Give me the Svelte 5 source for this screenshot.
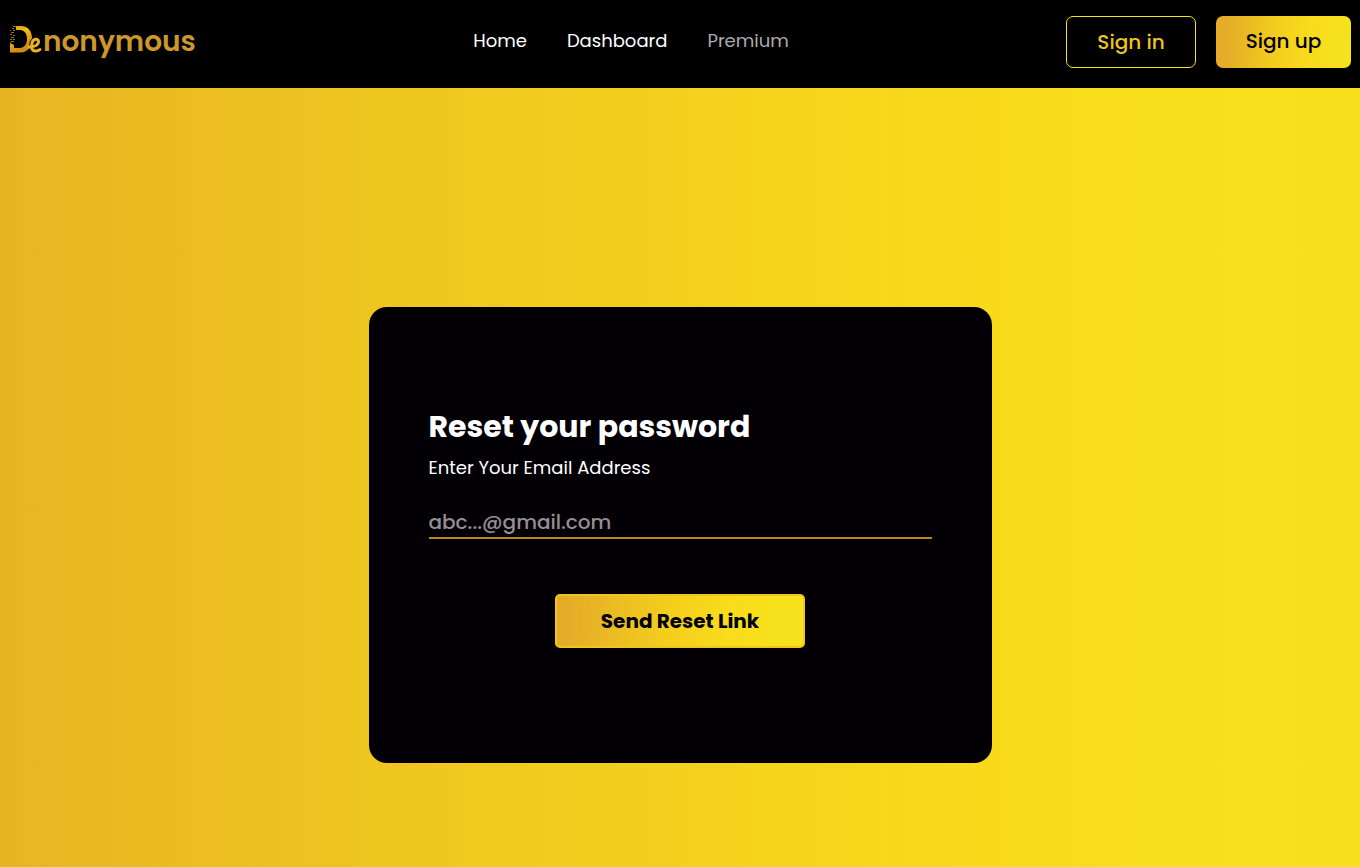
<script>
  let email = $state('');
</script>

<div class="page">
  <header>
    <a class="logo" href="#home" aria-label="Denonymous">
      <svg width="34" height="30" viewBox="0 0 34 30" aria-hidden="true">
        <defs>
          <linearGradient id="gold" gradientUnits="userSpaceOnUse" x1="4" y1="0" x2="20" y2="30">
            <stop offset="0" stop-color="#d99a16" />
            <stop offset="0.3" stop-color="#f0bd1c" />
            <stop offset="0.6" stop-color="#dc9a17" />
            <stop offset="0.8" stop-color="#cf8614" />
            <stop offset="1" stop-color="#eab01a" />
          </linearGradient>
        </defs>
        <path
          fill="url(#gold)"
          d="M7 1H12C19 1 23 6 23 13.500C23 22 18 27.500 12 27.500H1V18L5 20V23H11C15 23 18 19.500 18 14C18 8.500 15.500 5 11 5H7Z"
        />
        <path
          fill="none"
          stroke="#000"
          stroke-width="5"
          d="M22.500 21C26 21 29.500 19.500 29.500 16.500C29.500 13.500 24 14 23 18C22 22 22.500 26 26.500 26"
        />
        <path
          fill="none"
          stroke="#eab31d"
          stroke-width="3"
          stroke-linecap="round"
          d="M20 22C25.500 22 29.500 20 29.500 16.500C29.500 13 24 13.500 23 18C22 23 23 26 26.500 26C28.500 26 30 25.500 31 24.500"
        />
        <path
          fill="none"
          stroke="#9a741d"
          stroke-width="1"
          d="M3 3.500H5M4 1.500H7M1 5.500H2M4 5.500H6M2 7.500H5M1 9.500H3M4 10.500H6M2 12.500H5M1 14.500H3M4 14.500H6M2 16.500H5M1 17.500H2"
        />
      </svg>
      <span>nonymous</span>
    </a>
    <nav aria-label="Main">
      <a href="#home">Home</a>
      <a href="#dashboard">Dashboard</a>
      <a class="muted" href="#premium">Premium</a>
    </nav>
    <div class="actions">
      <button class="signin" type="button">Sign in</button>
      <button class="signup" type="button">Sign up</button>
    </div>
  </header>

  <main>
    <form class="card" onsubmit={(e) => e.preventDefault()}>
      <h1>Reset your password</h1>
      <label for="email">Enter Your Email Address</label>
      <input id="email" type="email" placeholder="abc...@gmail.com" bind:value={email} />
      <button class="send" type="submit">Send Reset Link</button>
    </form>
  </main>
</div>

<style>
  :global(body) {
    margin: 0;
    background: #000;
  }

  .page,
  button,
  input {
    font-family: Poppins, Inter, sans-serif;
    font-weight: 500;
  }

  .page {
    display: flex;
    flex-direction: column;
    min-height: 100vh;
  }

  header {
    display: grid;
    grid-template-columns: 1fr auto 1fr;
    align-items: start;
    box-sizing: border-box;
    height: 88px;
    padding: 16px 9px;
    background: #000;
  }

  a {
    color: #fff;
    text-decoration: none;
  }

  .logo {
    display: flex;
    align-items: center;
    height: 48px;
    color: #cd982b;
    font-size: 28px;
    font-weight: 600;
  }

  .logo span {
    line-height: 48px;
    padding-top: 4px;
  }

  nav {
    display: flex;
    gap: 40px;
    padding-right: 98px;
    font-size: 18px;
    font-weight: 400;
    line-height: 50px;
  }

  .muted {
    color: #adadad;
  }

  .actions {
    display: flex;
    justify-content: flex-end;
    gap: 20px;
  }

  .actions button {
    height: 52px;
    border-radius: 7px;
    font-size: 20px;
  }

  .signin {
    width: 130px;
    border: 1px solid #f8e11f;
    background: #000;
    color: #efc320;
  }

  .signup {
    width: 135px;
    padding: 0 0 2px;
    border: 0;
    background: linear-gradient(92deg, #e4ac28 8%, #f3ce1d 45%, #f9dc1c 70%, #f5e31c 100%);
    color: #000;
  }

  main {
    flex: 1;
    display: flex;
    justify-content: center;
    align-items: flex-start;
    padding: 219px 24px 104px;
    background: linear-gradient(90deg, #e7b522 0%, #f1c91f 35%, #f8d81b 68%, #f8df1b 85%, #f7e01b 100%);
  }

  .card {
    display: flex;
    flex-direction: column;
    box-sizing: border-box;
    width: 100%;
    max-width: 623px;
    padding: 96px 60px 115px;
    border-radius: 18px;
    background: #020005;
    color: #fff;
  }

  h1 {
    margin: 0;
    font-size: 30px;
    font-weight: 700;
    line-height: 48px;
  }

  label {
    margin-top: 4px;
    font-size: 18px;
    font-weight: 400;
    line-height: 26px;
  }

  input {
    height: 36px;
    margin-top: 22px;
    padding: 4px 0 0;
    box-sizing: border-box;
    border: 0;
    border-bottom: 2px solid #b9851d;
    border-radius: 0;
    outline: 0;
    background: transparent;
    color: #fff;
    font-size: 20px;
  }

  input::placeholder {
    color: #978e91;
    opacity: 1;
  }

  .send {
    align-self: center;
    width: 250px;
    height: 54px;
    margin-top: 55px;
    border: 2px solid #f2c41f;
    border-radius: 5px;
    background: linear-gradient(92deg, #e4ac28 4%, #f3ce1d 45%, #f9dc1c 70%, #f5e31c 100%);
    color: #000;
    font-size: 20px;
    font-weight: 700;
  }
</style>
